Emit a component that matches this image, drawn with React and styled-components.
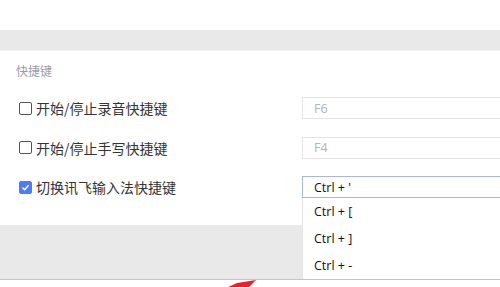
import React, { useState } from "react";
import styled, { createGlobalStyle } from "styled-components";

const GlobalStyle = createGlobalStyle`
  html, body {
    margin: 0;
    padding: 0;
    background: #fff;
    overflow: hidden;
  }
  body {
    font-family: "Noto Sans CJK SC", "Noto Sans", sans-serif;
  }
`;

const Page = styled.div`
  position: relative;
  width: 500px;
  height: 287px;
  overflow: hidden;
  background: #fff;
`;

const TopSpace = styled.div`
  height: 30px;
`;

const Band = styled.div`
  height: 20px;
  background: #e9e9e9;
  border-bottom: 1px solid #f2f2f2;
`;

const Section = styled.div`
  display: flex;
  flex-direction: column;
  padding-top: 11px;
`;

const SectionTitle = styled.div`
  padding-left: 16px;
  font-size: 12px;
  line-height: 18px;
  color: #9a9ca8;
  margin-bottom: 17px;
`;

const Rows = styled.div`
  display: flex;
  flex-direction: column;
  gap: 17.5px;
`;

const Row = styled.div`
  display: flex;
  align-items: center;
  height: 22px;
  padding-left: 19px;
`;

const Label = styled.label`
  display: flex;
  align-items: center;
  gap: 4px;
  width: 283px;
  flex-shrink: 0;
  font-size: 14px;
  color: #333;
  cursor: pointer;
`;

const Box = styled.span`
  box-sizing: border-box;
  width: 13px;
  height: 13px;
  border-radius: 2px;
  display: flex;
  align-items: center;
  justify-content: center;
  border: 1.5px solid ${(p) => (p.checked ? "#4d7cf5" : "#555")};
  background: ${(p) => (p.checked ? "#4d7cf5" : "#fff")};
`;

const InputWrap = styled.div`
  position: relative;
  flex-shrink: 0;
`;

const KeyInput = styled.div`
  box-sizing: border-box;
  width: 220px;
  height: 22px;
  padding-left: 11px;
  display: flex;
  align-items: center;
  font-family: "Open Sans", "Noto Sans", sans-serif;
  font-size: 12.5px;
  color: ${(p) => (p.active ? "#111" : "#b4b4b4")};
  border: 1px solid ${(p) => (p.active ? "#a9b6d6" : "#e4e4e4")};
  background: #fff;
`;

const Dropdown = styled.div`
  position: absolute;
  top: 100%;
  left: 0;
  width: 220px;
  background: #fff;
  border-left: 1px solid #e4e4e4;
  z-index: 2;
`;

const Option = styled.div`
  height: 27px;
  display: flex;
  align-items: center;
  padding-left: 11px;
  font-family: "Open Sans", "Noto Sans", sans-serif;
  font-size: 12.5px;
  color: #111;
`;

const Footer = styled.div`
  margin-top: 27px;
  height: 54px;
  background: #e9e9e9;
  border-bottom: 1px solid #c4c4c4;
`;

const Arrow = styled.svg`
  position: absolute;
  left: 224px;
  top: 279px;
`;

function Check({ checked }) {
  return (
    <Box checked={checked}>
      {checked && (
        <svg width="9" height="9" viewBox="0 0 9 9">
          <path d="M1.5 4.6 L3.7 6.7 L7.6 2.3" fill="none" stroke="#fff" strokeWidth="1.5" />
        </svg>
      )}
    </Box>
  );
}

export default function App() {
  const [items, setItems] = useState([
    { label: "开始/停止录音快捷键", key: "F6", checked: false },
    { label: "开始/停止手写快捷键", key: "F4", checked: false },
    { label: "切换讯飞输入法快捷键", key: "Ctrl + '", checked: true },
  ]);

  const toggle = (i) =>
    setItems(items.map((it, j) => (j === i ? { ...it, checked: !it.checked } : it)));

  return (
    <Page>
      <GlobalStyle />
      <TopSpace />
      <Band />
      <Section>
        <SectionTitle>快捷键</SectionTitle>
        <Rows>
          {items.map((it, i) => (
            <Row key={it.label}>
              <Label onClick={() => toggle(i)}>
                <Check checked={it.checked} />
                {it.label}
              </Label>
              <InputWrap>
                <KeyInput active={it.checked}>{it.key}</KeyInput>
                {i === 2 && (
                  <Dropdown>
                    <Option>Ctrl + [</Option>
                    <Option>Ctrl + ]</Option>
                    <Option>Ctrl + -</Option>
                  </Dropdown>
                )}
              </InputWrap>
            </Row>
          ))}
        </Rows>
        <Footer />
      </Section>
      <Arrow width="36" height="10" viewBox="0 0 36 10">
        <polygon points="2,9 13,4 32,1 24,9" fill="#e8222a" />
      </Arrow>
    </Page>
  );
}
